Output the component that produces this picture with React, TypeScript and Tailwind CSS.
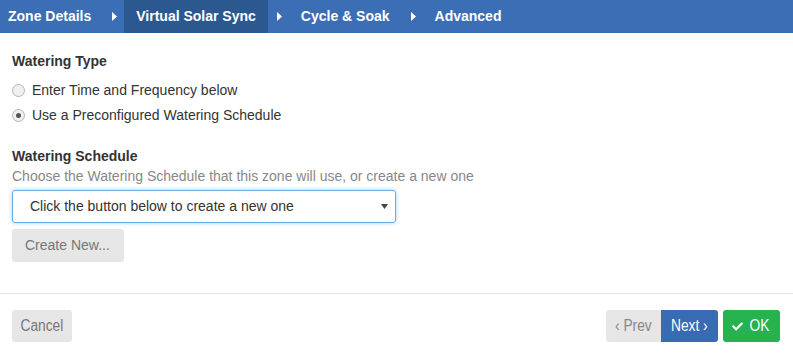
import { FaCheck } from 'react-icons/fa'

const tabs = ['Zone Details', 'Virtual Solar Sync', 'Cycle & Soak', 'Advanced']

function Caret() {
  return (
    <svg width="5" height="9" viewBox="0 0 5 9" className="ml-[9px] mr-[7px]">
      <path d="M0 0 L5 4.5 L0 9 Z" fill="white" />
    </svg>
  )
}

function Radio({ checked, label }: { checked?: boolean; label: string }) {
  return (
    <label className="flex items-center h-[25px]">
      <span className="w-[13px] h-[13px] rounded-full border border-[#b5b5b5] bg-[#f0f0f0] flex items-center justify-center">
        {checked && <span className="w-[5px] h-[5px] rounded-full bg-[#555]" />}
      </span>
      <span className="ml-[7px]">{label}</span>
    </label>
  )
}

function Narrow({ children }: { children: React.ReactNode }) {
  return <span className="inline-block scale-x-[0.86]">{children}</span>
}

export default function App() {
  return (
    <div className="w-[793px] h-[356px] bg-white flex flex-col font-['Liberation_Sans',Arial,sans-serif] text-[14px] text-[#333]">
      <div className="h-[33px] bg-[#3b6eb5] flex items-stretch text-white font-bold text-[14px]">
        {tabs.map((t, i) => (
          <div key={t} className="flex items-center">
            <div className={`h-full flex items-center pr-[12px] ${i === 0 ? 'pl-[8px]' : 'pl-[12px]'} ${i === 1 ? 'bg-[#2c5890]' : ''}`}>
              {t}
            </div>
            {i < tabs.length - 1 && <Caret />}
          </div>
        ))}
      </div>

      <div className="flex-1 px-[12px] pt-[20px]">
        <div className="font-bold leading-[16px]">Watering Type</div>
        <div className="mt-[9px]">
          <Radio label="Enter Time and Frequency below" />
          <Radio checked label="Use a Preconfigured Watering Schedule" />
        </div>

        <div className="mt-[20px] font-bold leading-[16px]">Watering Schedule</div>
        <div className="mt-[4px] text-[#888] leading-[16px]">
          Choose the Watering Schedule that this zone will use, or create a new one
        </div>
        <div className="mt-[6px] w-[384px] h-[33px] rounded-[3px] border border-[#66afe9] shadow-[0_0_4px_rgba(102,175,233,0.6)] flex items-center pl-[17px] pr-[7px]">
          <span className="flex-1">Click the button below to create a new one</span>
          <svg width="7" height="5" viewBox="0 0 7 5">
            <path d="M0 0 H7 L3.5 5 Z" fill="#444" />
          </svg>
        </div>
        <div className="mt-[6px] w-[112px] h-[33px] rounded-[3px] bg-[#e6e6e6] text-[#777] flex items-center pl-[13px]">
          Create New...
        </div>
      </div>

      <div className="h-[63px] border-t border-[#e5e5e5] flex items-start pt-[16px] px-[12px] text-[16px]">
        <div className="w-[60px] h-[32px] rounded-[3px] bg-[#e6e6e6] text-[#777] flex items-center justify-center">
          <Narrow>Cancel</Narrow>
        </div>
        <div className="flex-1" />
        <div className="flex">
          <div className="w-[55px] h-[32px] rounded-l-[3px] bg-[#e6e6e6] text-[#888] flex items-center justify-center">
            <Narrow>‹ Prev</Narrow>
          </div>
          <div className="w-[57px] h-[32px] rounded-r-[3px] bg-[#386bb4] text-white flex items-center justify-center">
            <Narrow>Next ›</Narrow>
          </div>
        </div>
        <div className="ml-[5px] mr-[1px] w-[57px] h-[32px] rounded-[3px] bg-[#25b24f] text-white flex items-center justify-center gap-[5px]">
          <FaCheck size={11} />
          <Narrow>OK</Narrow>
        </div>
      </div>
    </div>
  )
}
